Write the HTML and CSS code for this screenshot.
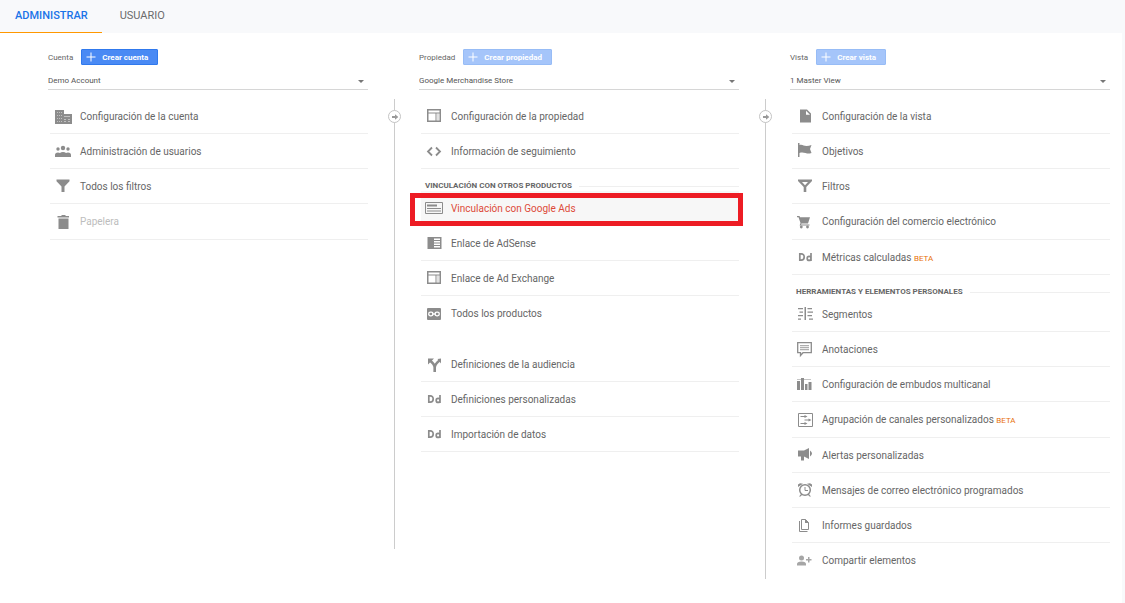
FILE: index.html
```html
<!DOCTYPE html>
<html lang="es">
<head>
<meta charset="utf-8">
<title>Administrar</title>
<link rel="stylesheet" href="styles.css">
</head>
<body>
<svg class="sprite" aria-hidden="true">
  <defs>
    <symbol id="plus" viewBox="0 0 10 10"><path d="M4.500 0.500h1v4h4v1h-4v4h-1v-4h-4v-1h4z"/></symbol>
    <symbol id="layout" viewBox="0 0 18 18"><path fill-rule="evenodd" d="M2 2h14v13H2zM3.500 3.500v2h11v-2zM3.500 6.500v7h7v-7zM11.500 6.500v7h3v-7z"/><path d="M12.500 6.500h1v7h-1z" opacity=".5"/></symbol>
    <symbol id="dd" viewBox="0 0 18 18"><path fill="none" stroke="currentColor" stroke-width="1.700" d="M3.800 5.800v6.400h1.400c4 0 4-6.400 0-6.400zM15 5v8M15 10.400a1.900 2 0 1 0-3.800 0a1.900 2 0 1 0 3.800 0"/></symbol>
    <symbol id="building" viewBox="0 0 18 18"><path d="M1 3h9v4h8v10H1z"/><path fill="#fff" opacity=".45" d="M3 5h1v1H3zM5 5h1v1H5zM7 5h1v1H7zM3 8h1v1H3zM5 8h1v1H5zM7 8h1v1H7zM3 11h1v1H3zM5 11h1v1H5zM7 11h1v1H7zM3 14h1v1H3zM5 14h1v1H5zM7 14h1v1H7zM10 9h6v1h-6zM10 12h2v1h-2zM14 12h2v1h-2zM10 14h2v1h-2zM14 14h2v1h-2z"/></symbol>
    <symbol id="people" viewBox="0 0 18 18"><circle cx="4" cy="7" r="1.700"/><circle cx="9" cy="6" r="2.200"/><circle cx="14" cy="7" r="1.700"/><path d="M1 15v-2q0-2.500 3-2.500q1.300 0 2 .5q1-1 3-1t3 1q.7-.5 2-.5q3 0 3 2.500v2z"/></symbol>
    <symbol id="funnel" viewBox="0 0 18 18"><path d="M2.500 2.500h13v1.700L10.500 9.500V15h-3V9.500l-5-5.300z"/></symbol>
    <symbol id="trash" viewBox="0 0 18 18"><path d="M3.500 3H7l1-1h3l1 1h3v1.500H3.500zM4.500 5.500h10V16h-10z"/></symbol>
    <symbol id="code" viewBox="0 0 18 18"><path fill="none" stroke="currentColor" stroke-width="1.800" d="M7 5.500L3 9.500l4 4M11 5.500l4 4-4 4"/></symbol>
    <symbol id="ads" viewBox="0 0 18 18"><path fill="none" stroke="currentColor" d="M.5 3.500h17v11H.5z"/><path d="M2 5.500h10v2H2zM2 9h14v1H2zM2 11.500h14v1H2z"/></symbol>
    <symbol id="adsense" viewBox="0 0 18 18"><path fill-rule="evenodd" d="M2.500 3h14v12h-14zM9 4.500V6h6V4.500zM9 7v1.500h6V7zM9 9.500V11h6V9.500zM9 12v1.500h6V12z"/></symbol>
    <symbol id="chain" viewBox="0 0 18 18"><rect x="2" y="3" width="14" height="12" rx="1"/><g fill="none" stroke="#fff" stroke-width="1.300"><rect x="3.700" y="7.200" width="4.300" height="3.600" rx="1.800"/><rect x="10" y="7.200" width="4.300" height="3.600" rx="1.800"/><path d="M7 9h4"/></g></symbol>
    <symbol id="split" viewBox="0 0 18 18"><path fill="none" stroke="currentColor" stroke-width="2.600" d="M9.700 17v-4.500Q9.700 9.500 5 5.500M9.700 12.500Q10 9 14.500 5.500"/><path d="M3 3.500h6L3 9.500zM12.500 4l3.500-.5v5z"/></symbol>
    <symbol id="page" viewBox="0 0 18 18"><path fill-rule="evenodd" d="M4 2.500h7L15 6.500V15.500H4zM10 3.700v4h4z"/></symbol>
    <symbol id="flag" viewBox="0 0 18 18"><path d="M2 1h1.500v2c3-1 4 1 7 1q2.500 0 5-1l-1.500 4L15.500 11c-3 1-4 .5-6 0s-4-.8-6 0v4H2z"/></symbol>
    <symbol id="filter" viewBox="0 0 18 18"><path fill-rule="evenodd" d="M2 2.500h14V4l-5.700 6v5H7.700v-5L2 4zM6 5l3 3.300L12 5z"/></symbol>
    <symbol id="cart" viewBox="0 0 18 18"><path d="M1 3h2.500l.6 1.300H14L12 10.500H5.500L5 11.500h8.500v1H3.600L4.500 10 2.500 4.200H1z"/><circle cx="5.300" cy="14" r="1.400"/><circle cx="11.500" cy="14" r="1.400"/></symbol>
    <symbol id="segments" viewBox="0 0 18 18"><path d="M2 3h5v1.300H2zM3.500 6.500H7v1.300H3.500zM2 10h5v1.300H2zM2 13.500h3v1.300H2zM8.500 2H10v13H8.500zM11.500 3H16v1.300h-4.500zM11.500 6.500H17v1.300h-5.500zM11.500 10H16v1.300h-4.500zM13 13.500h4v1.300h-4z"/></symbol>
    <symbol id="note" viewBox="0 0 18 18"><path fill="none" stroke="currentColor" stroke-width="1.300" d="M1.700 2.700h13.600v10H7L4.500 15.500v-2.800H1.700z"/><path opacity=".7" d="M4 5h9v1.200H4zM4 7h9v1.200H4zM4 9h9v1.200H4z"/></symbol>
    <symbol id="bars" viewBox="0 0 18 18"><path d="M1 6h3v9H1zM5 3h3v12H5zM9 9h2.500v6H9zM12.500 7h3v8h-3z"/><path opacity=".5" d="M1 4h14v1H1z"/></symbol>
    <symbol id="channels" viewBox="0 0 18 18"><path fill="none" stroke="currentColor" d="M2.500 2.500h14v13h-14z"/><path d="M4.500 5h4V4l3 1.500-3 1.500V6h-4zM8.500 8.500h4v-1l3 1.500-3 1.500v-1h-4zM4.500 12h4v-1l3 1.500-3 1.500v-1h-4z"/></symbol>
    <symbol id="megaphone" viewBox="0 0 18 18"><path d="M2 4.500h6L13 2v11l-5-2.500v4H5v-4H2zM14 4.500q4 3 0 6z"/></symbol>
    <symbol id="clock" viewBox="0 0 18 18"><circle cx="9" cy="9" r="5.300" fill="none" stroke="currentColor" stroke-width="1.500"/><path d="M2 6V3.500L4 2.300l3 .5zM16 6V3.500L14 2.300l-3 .5zM3 15.500l2.500-3 1 1-2 2zM15 15.500l-2.500-3-1 1 2 2z"/><path fill="none" stroke="currentColor" d="M9 6v3.500h3"/></symbol>
    <symbol id="copy" viewBox="0 0 18 18"><path fill="none" stroke="currentColor" d="M5.500 3.500h4l3 3v7h-7zM3.500 5v10.500h8"/><path d="M9 3v4h4z"/></symbol>
    <symbol id="adduser" viewBox="0 0 18 18"><circle cx="5.500" cy="6" r="2.500"/><path d="M1 13.500V12q0-2.500 4.500-2.500T10 12v1.500zM10 7h2V5h1.500v2h2v1.500h-2v2H12v-2h-2z"/></symbol>
    <symbol id="arrow" viewBox="0 0 8 8"><path d="M1 3h3V1.200L7.300 4 4 6.800V5H1z"/></symbol>
  </defs>
</svg>
<nav class="tabs">
  <a class="tab tab-active" href="#administrar" aria-current="page">ADMINISTRAR</a>
  <a class="tab" href="#usuario">USUARIO</a>
</nav>
<main class="panel">
  <section class="column">
    <div class="column-head"><label for="cuenta">Cuenta</label><button class="create"><svg><use href="#plus"/></svg>Crear cuenta</button></div>
    <div class="picker"><select id="cuenta"><option>Demo Account</option></select></div>
    <ul class="list">
      <li><a class="item" href="#c1"><svg class="icon"><use href="#building"/></svg>Configuración de la cuenta</a></li>
      <li><a class="item" href="#c2"><svg class="icon"><use href="#people"/></svg>Administración de usuarios</a></li>
      <li><a class="item" href="#c3"><svg class="icon"><use href="#funnel"/></svg>Todos los filtros</a></li>
      <li><a class="item item-muted" href="#c4"><svg class="icon"><use href="#trash"/></svg>Papelera</a></li>
    </ul>
  </section>
  <div class="divider divider-short"><button class="move" aria-label="Mover propiedad"><svg><use href="#arrow"/></svg></button></div>
  <section class="column">
    <div class="column-head"><label for="propiedad">Propiedad</label><button class="create" disabled><svg><use href="#plus"/></svg>Crear propiedad</button></div>
    <div class="picker"><select id="propiedad"><option>Google Merchandise Store</option></select></div>
    <ul class="list">
      <li><a class="item" href="#p1"><svg class="icon"><use href="#layout"/></svg>Configuración de la propiedad</a></li>
      <li><a class="item" href="#p2"><svg class="icon"><use href="#code"/></svg>Información de seguimiento</a></li>
    </ul>
    <h2 class="group">VINCULACIÓN CON OTROS PRODUCTOS</h2>
    <ul class="list list-open">
      <li><a class="item item-marked" href="#p3"><svg class="icon"><use href="#ads"/></svg>Vinculación con Google Ads</a></li>
      <li><a class="item" href="#p4"><svg class="icon"><use href="#adsense"/></svg>Enlace de AdSense</a></li>
      <li><a class="item" href="#p5"><svg class="icon"><use href="#layout"/></svg>Enlace de Ad Exchange</a></li>
      <li><a class="item" href="#p6"><svg class="icon"><use href="#chain"/></svg>Todos los productos</a></li>
    </ul>
    <ul class="list list-apart">
      <li><a class="item" href="#p7"><svg class="icon"><use href="#split"/></svg>Definiciones de la audiencia</a></li>
      <li><a class="item" href="#p8"><svg class="icon"><use href="#dd"/></svg>Definiciones personalizadas</a></li>
      <li><a class="item" href="#p9"><svg class="icon"><use href="#dd"/></svg>Importación de datos</a></li>
    </ul>
  </section>
  <div class="divider"><button class="move" aria-label="Mover vista"><svg><use href="#arrow"/></svg></button></div>
  <section class="column">
    <div class="column-head"><label for="vista">Vista</label><button class="create" disabled><svg><use href="#plus"/></svg>Crear vista</button></div>
    <div class="picker"><select id="vista"><option>1 Master View</option></select></div>
    <ul class="list">
      <li><a class="item" href="#v1"><svg class="icon"><use href="#page"/></svg>Configuración de la vista</a></li>
      <li><a class="item" href="#v2"><svg class="icon"><use href="#flag"/></svg>Objetivos</a></li>
      <li><a class="item" href="#v3"><svg class="icon"><use href="#filter"/></svg>Filtros</a></li>
      <li><a class="item" href="#v4"><svg class="icon"><use href="#cart"/></svg>Configuración del comercio electrónico</a></li>
      <li><a class="item" href="#v5"><svg class="icon"><use href="#dd"/></svg><span>Métricas calculadas <span class="beta">BETA</span></span></a></li>
    </ul>
    <h2 class="group">HERRAMIENTAS Y ELEMENTOS PERSONALES</h2>
    <ul class="list list-open">
      <li><a class="item" href="#v6"><svg class="icon"><use href="#segments"/></svg>Segmentos</a></li>
      <li><a class="item" href="#v7"><svg class="icon"><use href="#note"/></svg>Anotaciones</a></li>
      <li><a class="item" href="#v8"><svg class="icon"><use href="#bars"/></svg>Configuración de embudos multicanal</a></li>
      <li><a class="item" href="#v9"><svg class="icon"><use href="#channels"/></svg><span>Agrupación de canales personalizados <span class="beta">BETA</span></span></a></li>
      <li><a class="item" href="#v10"><svg class="icon"><use href="#megaphone"/></svg>Alertas personalizadas</a></li>
      <li><a class="item" href="#v11"><svg class="icon"><use href="#clock"/></svg>Mensajes de correo electrónico programados</a></li>
      <li><a class="item" href="#v12"><svg class="icon"><use href="#copy"/></svg>Informes guardados</a></li>
      <li><a class="item" href="#v13"><svg class="icon icon-light"><use href="#adduser"/></svg>Compartir elementos</a></li>
    </ul>
  </section>
</main>
</body>
</html>
```
FILE: styles.css
```css
* { box-sizing: border-box; }
body {
  margin: 0;
  min-height: 100vh;
  display: flex;
  flex-direction: column;
  background: #f8f9fb;
  color: #666;
  font-family: Roboto, "Liberation Sans", sans-serif;
  font-size: 10px;
}
.sprite { position: absolute; width: 0; height: 0; }
svg { fill: currentColor; flex: none; }
a { color: inherit; text-decoration: none; }

.tabs { display: flex; height: 33px; gap: 3px; }
.tab {
  padding: 0 14px 0 15px;
  line-height: 31px;
  font-size: 11px;
  color: #6b6b6b;
}
.tab-active {
  border-bottom: 1px solid #ff9800;
  color: #1a73e8;
  font-weight: 500;
}

.panel {
  flex: 1;
  display: grid;
  grid-template-columns: 1fr 51px 1fr 51px 1fr;
  margin-right: 3px;
  padding: 16px 12px 24px 48px;
  background: #fff;
}
.column { min-width: 0; }
.column-head {
  display: flex;
  align-items: center;
  gap: 8px;
  height: 16px;
  font-size: 8px;
}
.create {
  display: flex;
  align-items: center;
  gap: 6px;
  height: 16px;
  padding: 0 9px 0 4px;
  border: 1px solid #3079ed;
  border-radius: 1px;
  background: #4a8af4;
  color: #fff;
  font: bold 8px Roboto, "Liberation Sans", sans-serif;
}
.create:disabled { border-color: #97bcf6; background: #a5c5fa; }
.create svg { width: 10px; height: 10px; }

.picker { position: relative; margin-top: 7px; }
.picker select {
  display: block;
  width: 100%;
  height: 18px;
  padding: 0;
  appearance: none;
  border: 0;
  border-bottom: 1px solid #d6d6d6;
  border-radius: 0;
  background: none;
  color: #555;
  font: 8px Roboto, "Liberation Sans", sans-serif;
}
.picker::after {
  content: "";
  position: absolute;
  right: 4px;
  top: 8px;
  border: 3px solid transparent;
  border-top-color: #777;
  border-bottom: 0;
}

.list { list-style: none; margin: 0; padding: 0 0 0 2px; }
.picker + .list { margin-top: 9px; }
.list-apart { margin-top: 15px; }
.list li { height: 35px; border-bottom: 1px solid #efefef; }
.list li:nth-child(4n) { height: 36px; }
.list-open li:last-child { border-bottom-color: transparent; }
.item {
  display: flex;
  align-items: center;
  gap: 8px;
  height: 100%;
  padding-left: 4px;
}
.item-muted { color: #bdbdbd; }
.icon { width: 18px; height: 18px; color: #8c8c8c; }
.icon-light { color: #a6a6a6; }
.beta { color: #e8710a; font-size: 8px; }

.item-marked { position: relative; background: #f7f7f7; color: #dd4b39; }
.item-marked::after {
  content: "";
  position: absolute;
  inset: 2px -4px -1px -11px;
  border: 5px solid #ed1c24;
}

.group {
  display: flex;
  align-items: center;
  gap: 7px;
  height: 22px;
  margin: 0;
  padding: 12px 0 0 6px;
  font-size: 8px;
  line-height: 10px;
}
.group::after { content: ""; flex: 1; border-top: 1px solid #efefef; }

.divider {
  justify-self: center;
  width: 1px;
  margin-top: 50px;
  margin-left: 2px;
  padding-top: 11px;
  background: #ccc;
}
.divider-short { margin-bottom: 30px; }
.move {
  display: grid;
  place-items: center;
  width: 13px;
  height: 13px;
  margin-left: -6px;
  padding: 0;
  border: 1px solid #c4c4c4;
  border-radius: 50%;
  background: #fff;
  color: #999;
}
.move svg { width: 8px; height: 8px; }
```
